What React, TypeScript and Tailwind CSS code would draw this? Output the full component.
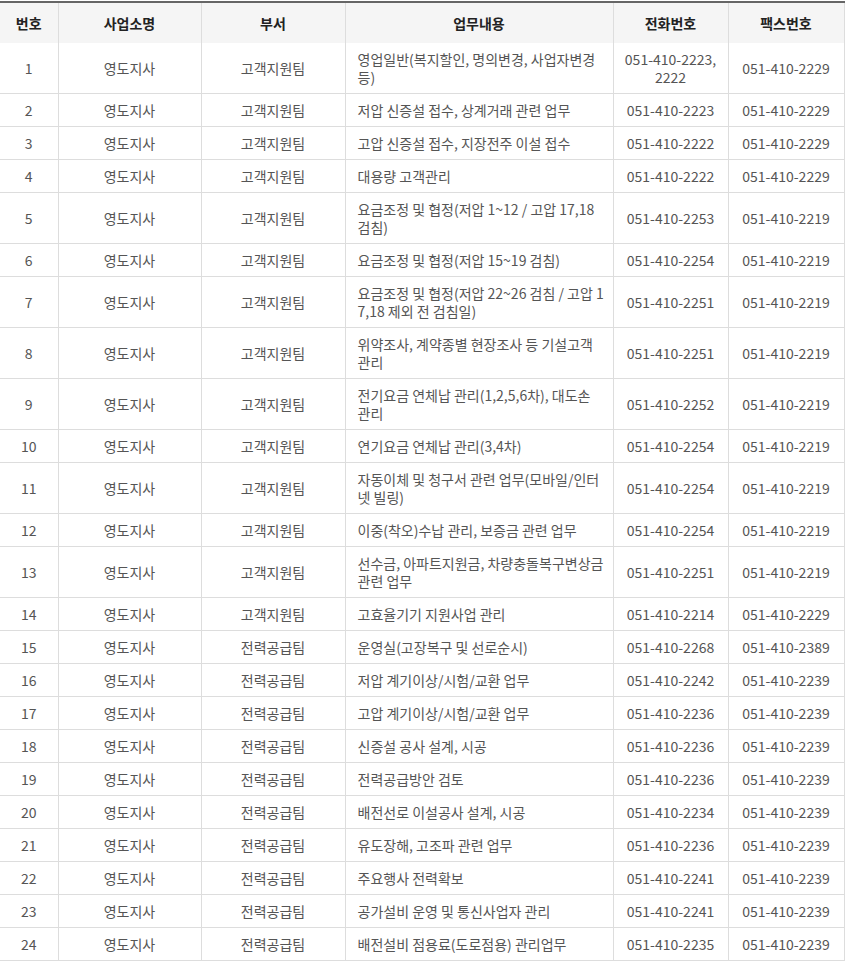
const rows: [string, string, string, string, string, string][] = [
  ["1", "영도지사", "고객지원팀", "영업일반(복지할인, 명의변경, 사업자변경 등)", "051-410-2223, 2222", "051-410-2229"],
  ["2", "영도지사", "고객지원팀", "저압 신증설 접수, 상계거래 관련 업무", "051-410-2223", "051-410-2229"],
  ["3", "영도지사", "고객지원팀", "고압 신증설 접수, 지장전주 이설 접수", "051-410-2222", "051-410-2229"],
  ["4", "영도지사", "고객지원팀", "대용량 고객관리", "051-410-2222", "051-410-2229"],
  ["5", "영도지사", "고객지원팀", "요금조정 및 협정(저압 1~12 / 고압 17,18 검침)", "051-410-2253", "051-410-2219"],
  ["6", "영도지사", "고객지원팀", "요금조정 및 협정(저압 15~19 검침)", "051-410-2254", "051-410-2219"],
  ["7", "영도지사", "고객지원팀", "요금조정 및 협정(저압 22~26 검침 / 고압 17,18 제외 전 검침일)", "051-410-2251", "051-410-2219"],
  ["8", "영도지사", "고객지원팀", "위약조사, 계약종별 현장조사 등 기설고객 관리", "051-410-2251", "051-410-2219"],
  ["9", "영도지사", "고객지원팀", "전기요금 연체납 관리(1,2,5,6차), 대도손 관리", "051-410-2252", "051-410-2219"],
  ["10", "영도지사", "고객지원팀", "연기요금 연체납 관리(3,4차)", "051-410-2254", "051-410-2219"],
  ["11", "영도지사", "고객지원팀", "자동이체 및 청구서 관련 업무(모바일/인터넷 빌링)", "051-410-2254", "051-410-2219"],
  ["12", "영도지사", "고객지원팀", "이중(착오)수납 관리, 보증금 관련 업무", "051-410-2254", "051-410-2219"],
  ["13", "영도지사", "고객지원팀", "선수금, 아파트지원금, 차량충돌복구변상금 관련 업무", "051-410-2251", "051-410-2219"],
  ["14", "영도지사", "고객지원팀", "고효율기기 지원사업 관리", "051-410-2214", "051-410-2229"],
  ["15", "영도지사", "전력공급팀", "운영실(고장복구 및 선로순시)", "051-410-2268", "051-410-2389"],
  ["16", "영도지사", "전력공급팀", "저압 계기이상/시험/교환 업무", "051-410-2242", "051-410-2239"],
  ["17", "영도지사", "전력공급팀", "고압 계기이상/시험/교환 업무", "051-410-2236", "051-410-2239"],
  ["18", "영도지사", "전력공급팀", "신증설 공사 설계, 시공", "051-410-2236", "051-410-2239"],
  ["19", "영도지사", "전력공급팀", "전력공급방안 검토", "051-410-2236", "051-410-2239"],
  ["20", "영도지사", "전력공급팀", "배전선로 이설공사 설계, 시공", "051-410-2234", "051-410-2239"],
  ["21", "영도지사", "전력공급팀", "유도장해, 고조파 관련 업무", "051-410-2236", "051-410-2239"],
  ["22", "영도지사", "전력공급팀", "주요행사 전력확보", "051-410-2241", "051-410-2239"],
  ["23", "영도지사", "전력공급팀", "공가설비 운영 및 통신사업자 관리", "051-410-2241", "051-410-2239"],
  ["24", "영도지사", "전력공급팀", "배전설비 점용료(도로점용) 관리업무", "051-410-2235", "051-410-2239"],
];

const heads = ["번호", "사업소명", "부서", "업무내용", "전화번호", "팩스번호"];
const widths = ["w-[58px]", "w-[143px]", "w-[144px]", "w-[268px]", "w-[115px]", "w-[116px]"];

export default function App() {
  return (
    <div className="bg-white pt-[1px] font-['Noto_Sans_CJK_KR','Noto_Sans',sans-serif]">
      <table className="w-[844px] table-fixed border-collapse border-t-2 border-t-[#666] text-[14px] leading-[18px]">
        <colgroup>
          {widths.map((w, i) => (
            <col key={i} className={w} />
          ))}
        </colgroup>
        <thead>
          <tr className="h-[41px] bg-[#f5f5f5]">
            {heads.map((h, i) => (
              <th
                key={h}
                className={
                  "border-r border-[#ddd] font-bold text-[#222] text-center px-2 " +
                  (i > 0 ? "border-l" : "")
                }
              >
                {h}
              </th>
            ))}
          </tr>
        </thead>
        <tbody className="text-[#555]">
          {rows.map((r) => (
            <tr key={r[0]}>
              <td className="border-b border-r border-[#ddd] text-center py-[7px] px-2">{r[0]}</td>
              <td className="border border-t-0 border-[#ddd] text-center py-[7px] px-2">{r[1]}</td>
              <td className="border border-t-0 border-[#ddd] text-center py-[7px] px-2">{r[2]}</td>
              <td className="border border-t-0 border-[#ddd] text-left py-[7px] pl-[12px] pr-[8px] break-all">{r[3]}</td>
              <td className="border border-t-0 border-[#ddd] text-center py-[7px] px-2">{r[4]}</td>
              <td className="border border-t-0 border-[#ddd] text-center py-[7px] px-2">{r[5]}</td>
            </tr>
          ))}
        </tbody>
      </table>
    </div>
  );
}
